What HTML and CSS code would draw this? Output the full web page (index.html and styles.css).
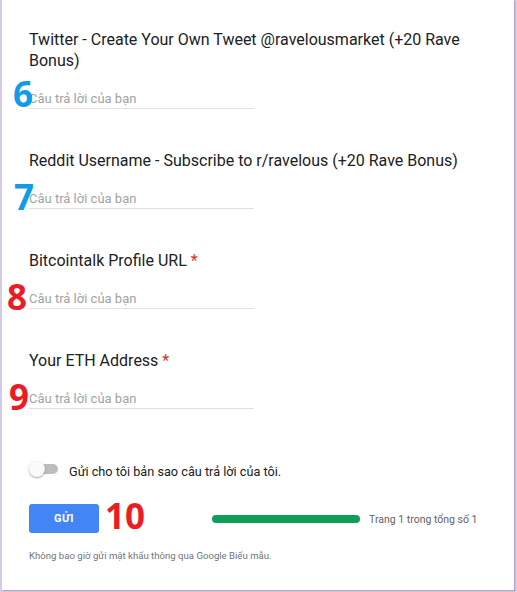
FILE: index.html
```html
<!DOCTYPE html>
<html lang="vi">
<head>
<meta charset="utf-8">
<title>Form</title>
<link rel="stylesheet" href="styles.css">
</head>
<body>
<div class="card">
  <div class="question first">
    <div class="q-title">Twitter - Create Your Own Tweet @ravelousmarket (+20 Rave Bonus)</div>
    <div class="answer"><span class="mark blue m6">6</span>Câu trả lời của bạn</div>
  </div>
  <div class="question">
    <div class="q-title">Reddit Username - Subscribe to r/ravelous (+20 Rave Bonus)</div>
    <div class="answer"><span class="mark blue m7">7</span>Câu trả lời của bạn</div>
  </div>
  <div class="question">
    <div class="q-title">Bitcointalk Profile URL <span class="req">*</span></div>
    <div class="answer"><span class="mark red m8">8</span>Câu trả lời của bạn</div>
  </div>
  <div class="question">
    <div class="q-title">Your ETH Address <span class="req">*</span></div>
    <div class="answer"><span class="mark red m9">9</span>Câu trả lời của bạn</div>
  </div>
  <div class="copy-row">
    <div class="toggle"><span class="track"></span><span class="knob"></span></div>
    <span class="copy-text">Gửi cho tôi bản sao câu trả lời của tôi.</span>
  </div>
  <div class="submit-row">
    <div class="btn-wrap">
      <button class="submit">GỬI</button>
      <span class="mark red m10">10</span>
    </div>
    <div class="progress"><div class="bar"></div></div>
    <span class="page-text">Trang 1 trong tổng số 1</span>
  </div>
  <div class="footer">Không bao giờ gửi mật khẩu thông qua Google Biểu mẫu.</div>
</div>
</body>
</html>
```

FILE: styles.css
```css
html, body {
  margin: 0;
  padding: 0;
}
body {
  background: #d7cae4;
  font-family: Roboto, "Noto Sans", Arial, sans-serif;
  height: 592px;
  overflow: hidden;
}
.card {
  margin-left: 2px;
  width: 512px;
  box-sizing: border-box;
  background: #fff;
  padding: 29px 0 29px 27px;
  box-shadow: 1px 1px 1px rgba(120, 90, 150, 0.35);
}
.question {
  margin-top: 41px;
}
.question.first {
  margin-top: 0;
}
.q-title {
  font-size: 16px;
  line-height: 21px;
  color: #202124;
  padding-right: 40px;
}
.req {
  color: #d93025;
}
.answer {
  position: relative;
  width: 225px;
  margin-top: 20px;
  font-size: 13px;
  line-height: 16px;
  padding-bottom: 1px;
  color: #a0a3a8;
  border-bottom: 1px solid #e0e0e0;
}
.mark {
  position: absolute;
  font-family: "Open Sans", "Liberation Sans", sans-serif;
  font-weight: 700;
  font-size: 35px;
  line-height: 36px;
}
.blue { color: #119de6; }
.red { color: #ec1c24; }
.m6 { left: -16px; top: -15px; }
.m7 { left: -15px; top: -12px; }
.m8 { left: -22px; top: -12px; }
.m9 { left: -20px; top: -12px; }
.m10 { left: 76px; top: -6px; }
.copy-row {
  display: flex;
  align-items: center;
  margin-top: 52px;
  height: 16px;
}
.toggle {
  position: relative;
  width: 29px;
  height: 16px;
}
.track {
  position: absolute;
  left: 6px;
  top: 3px;
  width: 23px;
  height: 10px;
  border-radius: 5px;
  background: #bdbdbd;
}
.knob {
  position: absolute;
  left: 0;
  top: 0;
  width: 16px;
  height: 16px;
  border-radius: 50%;
  background: #fafafa;
  box-shadow: 0 1px 2px rgba(0, 0, 0, 0.35);
}
.copy-text {
  margin-left: 11px;
  font-size: 12.7px;
  color: #202124;
  padding-top: 4px;
}
.submit-row {
  display: flex;
  align-items: center;
  margin-top: 27px;
}
.btn-wrap {
  position: relative;
}
.submit {
  display: block;
  width: 70px;
  height: 29px;
  border: none;
  border-radius: 3px;
  background: #4285f4;
  color: #fff;
  font-family: Roboto, sans-serif;
  font-weight: 700;
  font-size: 11px;
  letter-spacing: 0.5px;
  padding: 0;
}
.progress {
  margin-left: 113px;
  width: 148px;
  height: 8px;
  border-radius: 4px;
  background: #e0e0e0;
  overflow: hidden;
}
.bar {
  width: 100%;
  height: 100%;
  background: #0f9d58;
}
.page-text {
  margin-left: 9px;
  font-size: 10.5px;
  color: #5f6368;
  padding-top: 2px;
}
.footer {
  margin-top: 17px;
  font-size: 9.6px;
  color: #70757a;
}
```
